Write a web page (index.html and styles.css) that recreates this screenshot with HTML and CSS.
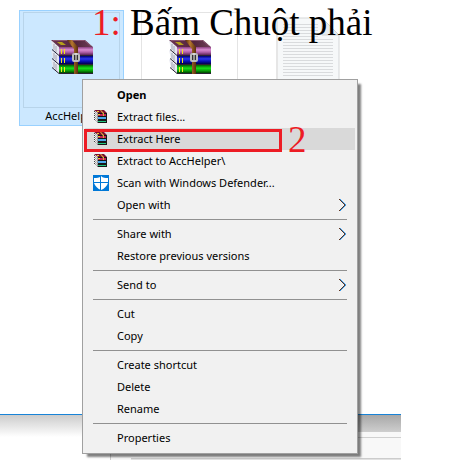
FILE: index.html
```
<!DOCTYPE html>
<html lang="vi">

<head>
    <meta charset="utf-8">
    <title>AccHelper</title>
    <link rel="stylesheet" href="styles.css">
</head>

<body>
    <!-- shared icons -->
    <svg class="defs" aria-hidden="true">
        <defs>
            <linearGradient id="cover" x1="0" y1="0" x2="1" y2="0">
                <stop offset="0" stop-color="#6a3350"/><stop offset=".6" stop-color="#54243c"/>
                <stop offset="1" stop-color="#6e4058"/>
            </linearGradient>
            <linearGradient id="plum" x1="0" y1="0" x2="0" y2="1">
                <stop offset="0" stop-color="#8a3f80"/><stop offset=".35" stop-color="#d98bd0"/>
                <stop offset=".65" stop-color="#b060a8"/><stop offset="1" stop-color="#5c2456"/>
            </linearGradient>
            <linearGradient id="blue" x1="0" y1="0" x2="0" y2="1">
                <stop offset="0" stop-color="#000070"/><stop offset=".35" stop-color="#2a35ee"/>
                <stop offset=".65" stop-color="#0a10b8"/><stop offset="1" stop-color="#00004c"/>
            </linearGradient>
            <linearGradient id="green" x1="0" y1="0" x2="0" y2="1">
                <stop offset="0" stop-color="#006000"/><stop offset=".4" stop-color="#18e018"/>
                <stop offset=".7" stop-color="#08a008"/><stop offset="1" stop-color="#004000"/>
            </linearGradient>
            <linearGradient id="strap" x1="0" y1="0" x2="1" y2="0">
                <stop offset="0" stop-color="#4b2408"/><stop offset=".45" stop-color="#b87830"/>
                <stop offset="1" stop-color="#5a2e0c"/>
            </linearGradient>
            <symbol id="books" viewBox="0 0 42 34">
                <path d="M0 0 8 7V16L2 10ZM0 10 8 16V25L2 19ZM0 19 8 25V34L2 28Z" fill="#e6e7f0"/>
                <path d="M3 4V10M5 6V12M3 13V19M5 15V21M3 22V28M5 24V30" stroke="#a3a4b2"/>
                <path d="M0 0H34L42 7H8Z" fill="url(#cover)"/>
                <path d="M2 .5H33.500L40 6" fill="none" stroke="#8a5570"/>
                <path d="M6 2H11L15 5H10Z" fill="#b5a01c"/>
                <path d="M8 7H42V15H8Z" fill="url(#plum)"/>
                <path d="M8 16H42V24H8Z" fill="url(#blue)"/>
                <path d="M8 25H42V33H8Z" fill="url(#green)"/>
                <path d="M1 9.500 8 15.500H42M1 18.500 8 24.500H42M1 27.500 8 33.500H42" fill="none" stroke="#2a2234"/>
                <path d="M10.500 9V14M13.500 9V14M10.500 18V23M13.500 18V23M10.500 27V32M13.500 27V32" stroke="#f2e61c"/>
                <path d="M16 0H21L27 7V34H23V9Z" fill="url(#strap)"/>
                <rect x="22" y="14" width="6" height="7" rx="1" fill="#333" stroke="#bcbcbc" stroke-width="2"/>
                <path d="M25 13V20" stroke="#f4f4f4"/>
            </symbol>
            <symbol id="books-small" viewBox="0 0 16 16">
                <path d="M1 1H11L14 4V14H5L1 11Z" fill="#fff"/>
                <path d="M1 2 5 5.500M1 4 5 7.500M1 6 5 9.500M1 8 5 11.500M1 10 5 13.500" stroke="#222" stroke-dasharray="1.200 .8"/>
                <path d="M5 4H14V14H5Z" fill="#161616"/>
                <path d="M1 1H11L14 4H5Z" fill="#7a1030"/>
                <path d="M5 5H13V7H5Z" fill="#c42052"/>
                <path d="M5 8H13V10H5Z" fill="#4ca8ec"/>
                <path d="M5 12H13V13H5Z" fill="#23c87f"/>
                <path d="M5 5H7V6H5ZM4 2H6V3H4Z" fill="#e8d028"/>
                <path d="M7 1H8L11 4V7H10V5Z" fill="#e0a83c"/>
            </symbol>
            <symbol id="defender" viewBox="0 0 16 16">
                <path d="M0 0H16V16H0Z" fill="#0078d7"/>
                <path d="M8 1C6 3 4 3 1 3V8C2 11 5 14 8 15 11 14 14 11 15 8V3C12 3 10 3 8 1Z" fill="#fff"/>
                <path d="M7.500 1V15M1 7.500H15" stroke="#0078d7"/>
            </symbol>
            <symbol id="arrow" viewBox="0 0 9 14">
                <path d="M2 1 8 7 2 13" fill="none" stroke="#3d9bea"/>
                <path d="M1 1 7 7 1 13" fill="none" stroke="#5c3420"/>
            </symbol>
        </defs>
    </svg>

    <main class="desktop">
        <section class="files">
            <div class="file selected">
                <div class="thumb"><svg class="archive"><use href="#books"/></svg></div>
                <span class="name">AccHelper</span>
            </div>
            <div class="file">
                <div class="thumb"><svg class="archive"><use href="#books"/></svg></div>
            </div>
            <div class="file">
                <div class="thumb plain">
                    <svg class="document" viewBox="0 0 64 90">
                        <path d="M1 1H46L63 18V89H1Z" fill="#f6f8f9" stroke="#d5d7d8"/>
                        <path d="M1 1V89" stroke="#e6e6e6" stroke-width="2"/>
                        <path d="M46 1V18H63Z" fill="#e9edef" stroke="#cfd3d5"/>
                        <path d="M7 7.500H42M7 10.500H42M7 13.500H42M7 16.500H42M7 19.500H42M7 22.500H57M7 25.500H57M7 28.500H57M7 31.500H57M7 34.500H57M7 37.500H57M7 40.500H57M7 43.500H57M7 46.500H57M7 49.500H57M7 52.500H57M7 55.500H57M7 58.500H57" stroke="#d9dbdd"/>
                    </svg>
                </div>
            </div>
        </section>

        <section class="behind">
            <div class="shade"></div>
            <div class="panel">
                <div class="titlebar"></div>
                <div class="strip"></div>
                <div class="body"></div>
            </div>
        </section>
    </main>

    <menu class="context">
        <li><button class="item default">Open</button></li>
        <li><button class="item"><svg class="icon"><use href="#books-small"/></svg>Extract files...</button></li>
        <li><button class="item hover"><svg class="icon"><use href="#books-small"/></svg>Extract Here</button></li>
        <li><button class="item"><svg class="icon"><use href="#books-small"/></svg>Extract to AccHelper\</button></li>
        <li><button class="item"><svg class="icon"><use href="#defender"/></svg>Scan with Windows Defender...</button></li>
        <li><button class="item">Open with<svg class="arrow"><use href="#arrow"/></svg></button></li>
        <li class="line"></li>
        <li><button class="item">Share with<svg class="arrow"><use href="#arrow"/></svg></button></li>
        <li><button class="item">Restore previous versions</button></li>
        <li class="line"></li>
        <li><button class="item">Send to<svg class="arrow"><use href="#arrow"/></svg></button></li>
        <li class="line"></li>
        <li><button class="item">Cut</button></li>
        <li><button class="item">Copy</button></li>
        <li class="line"></li>
        <li><button class="item">Create shortcut</button></li>
        <li><button class="item">Delete</button></li>
        <li><button class="item">Rename</button></li>
        <li class="line"></li>
        <li><button class="item">Properties</button></li>
    </menu>

    <!-- step notes -->
    <h1 class="note step1"><span class="red">1:</span> Bấm Chuột phải</h1>
    <div class="frame"></div>
    <div class="note step2 red">2</div>
</body>

</html>
```
FILE: styles.css
```
body {
  margin: 0;
  background: #fff;
  color: #000;
  font: 11px/16px "Noto Sans", "Open Sans", sans-serif;
}

.defs {
  position: absolute;
  width: 0;
  height: 0;
}

.desktop {
  display: flex;
  flex-direction: column;
  height: 100vh;
  margin-right: 49px;
  overflow: hidden;
}

/* explorer window */
.files {
  display: flex;
  gap: 13px;
  flex: 1;
  padding: 10px 19px;
  border-bottom: 1px solid #1883d7;
}

.file {
  box-sizing: border-box;
  flex: none;
  width: 105px;
  height: 116px;
  padding: 1px 3px;
  border: 1px solid transparent;
  text-align: center;
}

.selected {
  background: #cce8ff;
  border-color: #99d1ff;
}

.thumb {
  box-sizing: border-box;
  display: flex;
  align-items: center;
  justify-content: center;
  height: 96px;
  padding-bottom: 6px;
  border: 1px solid #e4e4e4;
}

.selected .thumb {
  border-color: #b8d4ea;
}

.plain {
  align-items: flex-end;
  padding-bottom: 0;
  border-color: transparent;
}

.archive {
  width: 42px;
  height: 34px;
}

.document {
  width: 64px;
  height: 90px;
}

/* window behind */
.behind {
  display: grid;
  grid-template-columns: 110px 1fr;
  height: 45px;
}

.shade {
  height: 22px;
  background: linear-gradient(#ccc, #fff);
}

.panel {
  display: flex;
  flex-direction: column;
  background: #f8f8f8;
  border-left: 1px solid #ccc;
}

.titlebar {
  height: 17px;
  background: linear-gradient(#a8a8a8, #cecece);
}

.strip {
  height: 5px;
  border-bottom: 1px solid #d0d0d0;
}

.body {
  margin: 20px 0 0 20px;
  height: 2px;
  background: #e2e2e2;
  border-top: 1px solid #ccc;
}

/* context menu */
.context {
  position: absolute;
  top: 79px;
  left: 82px;
  box-sizing: border-box;
  width: 276px;
  margin: 0;
  padding: 4px 2px;
  list-style: none;
  background: #f1f1f1;
  border: 1px solid #a0a0a0;
  box-shadow: 4px 4px 2px -1px rgba(0, 0, 0, 0.5);
}

.item {
  position: relative;
  display: flex;
  align-items: center;
  width: 100%;
  height: 22px;
  padding: 0 8px 0 32px;
  border: 0;
  background: none;
  color: #000;
  font: inherit;
}

.default {
  font-weight: bold;
}

.hover,
.item:hover {
  background: #d9d9d9;
}

.icon {
  position: absolute;
  left: 8px;
  width: 16px;
  height: 16px;
}

.arrow {
  width: 9px;
  height: 14px;
  margin-left: auto;
}

.line {
  height: 1px;
  margin: 3px 8px;
  background: #919191;
}

/* step notes */
.note {
  position: absolute;
  margin: 0;
  font: 37px/40px "Liberation Serif", serif;
  white-space: nowrap;
}

.red {
  color: #ed1c24;
}

.step1 {
  top: 3px;
  left: 92px;
}

.step2 {
  top: 120px;
  left: 288px;
}

.frame {
  position: absolute;
  top: 129px;
  left: 84px;
  box-sizing: border-box;
  width: 198px;
  height: 23px;
  border: 3px solid #ed1c24;
}
```
